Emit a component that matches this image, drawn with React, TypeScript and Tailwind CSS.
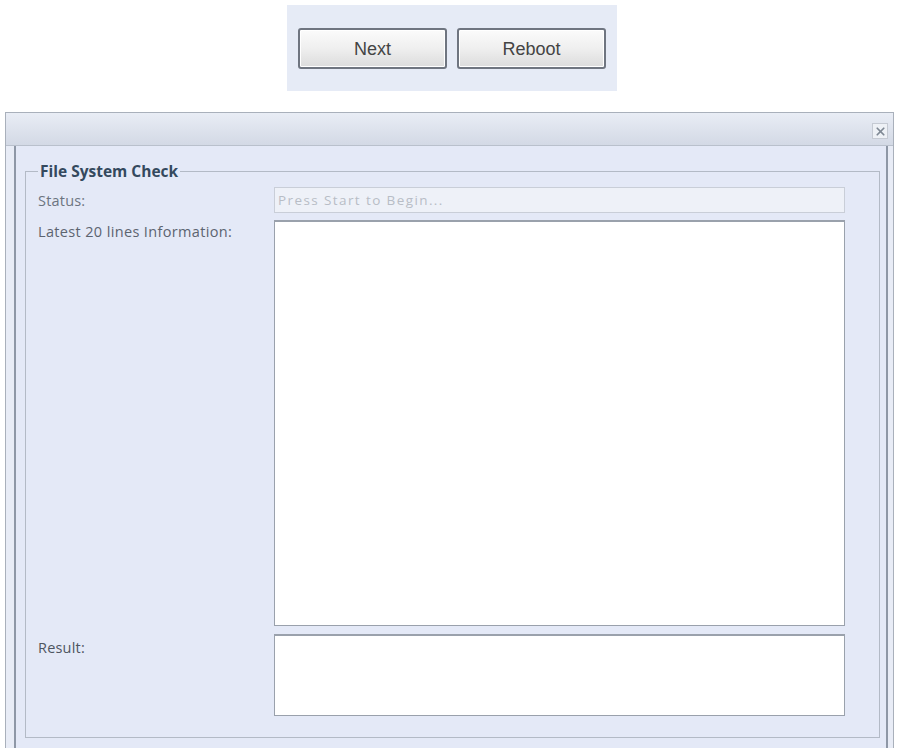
import { X } from 'lucide-react';

const labelFont = { fontFamily: '"Open Sans", "DejaVu Sans", sans-serif' };

const Button = ({ label }: { label: string }) => (
  <button
    className="w-[149px] h-[41px] rounded-[3px] border-2 border-[#6f7580] bg-gradient-to-b from-[#fbfbfb] via-[#efefef] to-[#dcdcdc] text-[18px] text-[#444] pt-[2px] shadow-[inset_0_0_0_1px_#ffffff]"
    style={{ fontFamily: '"Liberation Sans", Arial, sans-serif' }}
  >
    {label}
  </button>
);

export default function App() {
  return (
    <div className="w-[898px] h-[748px] bg-white overflow-hidden relative" style={labelFont}>
      <div className="flex justify-center pt-[5px] pl-[6px]">
        <div className="w-[330px] h-[86px] bg-[#e6ebf6] flex items-center justify-center gap-[10px]">
          <Button label="Next" />
          <Button label="Reboot" />
        </div>
      </div>

      <div className="mt-[21px] ml-[5px] w-[889px] h-[640px] border border-[#a9b0bb] bg-[#e8ecf6] flex flex-col">
        <div className="h-[33px] bg-gradient-to-b from-[#e9edf5] to-[#d3d9e5] border-b border-[#b9c0cc] flex justify-end items-center pr-[5px] pt-[4px]">
          <div className="w-[16px] h-[16px] shrink-0 bg-[#eef1f6] border border-[#c5cad3] flex items-center justify-center">
            <X className="w-[13px] h-[13px] text-[#7f8894]" strokeWidth={3.2} />
          </div>
        </div>
        <div className="flex-1 ml-[8px] mr-[5px] border-l-2 border-r-2 border-[#8e97a6] bg-[#e4e9f7] pl-[9px] pr-[6px] pt-[17px]">
          <fieldset className="h-[575px] border border-[#b3bac6] pl-[12px] pr-[34px] pb-[10px]">
            <legend className="ml-[0px] px-[2px] text-[15.5px] font-bold text-[#34495e] leading-[16px] tracking-[0px]">
              File System Check
            </legend>
            <div className="flex mt-[8px]">
              <div className="w-[236px] pt-[3px] text-[14.5px] text-[#6c7480] tracking-[0.2px]">Status:</div>
              <div className="flex-1 h-[26px] border border-[#c9ced8] bg-[#eef1f8] text-[13.5px] text-[#b8bdc6] pl-[3px] pt-[2px] tracking-[1.4px]">
                Press Start to Begin...
              </div>
            </div>
            <div className="flex mt-[7px]">
              <div className="w-[236px] pt-[1px] text-[14.5px] text-[#5c6470] tracking-[0.35px]">Latest 20 lines Information:</div>
              <div className="flex-1 h-[406px] border border-[#9aa1ac] border-t-2 bg-white" />
            </div>
            <div className="flex mt-[8px]">
              <div className="w-[236px] pt-[3px] text-[14.5px] text-[#4e5560] tracking-[0.2px]">Result:</div>
              <div className="flex-1 h-[82px] border border-[#9aa1ac] border-t-2 bg-white" />
            </div>
          </fieldset>
        </div>
      </div>
    </div>
  );
}
